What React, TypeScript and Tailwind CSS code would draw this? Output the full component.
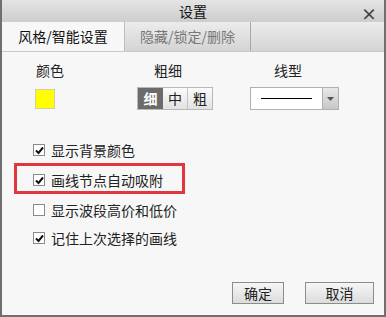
import React from 'react';

const font = { fontFamily: '"Noto Sans CJK SC", "Liberation Sans", sans-serif' };

function Check({ checked, label }: { checked: boolean; label: string }) {
    return (
        <div className="flex items-center h-[20px]">
            <span className="w-[12px] h-[12px] border border-[#8a8a8a] bg-white flex items-center justify-center">
                {checked && (
                    <svg width="9" height="9" viewBox="0 0 9 9">
                        <path d="M1 4.5 L3.5 7 L8 1.5" stroke="#111" strokeWidth="2" fill="none" />
                    </svg>
                )}
            </span>
            <span className="ml-[6px] text-[14px] text-[#222]">{label}</span>
        </div>
    );
}

export default function App() {
    return (
        <div
            style={font}
            className="w-[386px] h-[317px] bg-[#f7f7f7] border-x-2 border-b-2 border-[#6f6f6f] flex flex-col text-[#222]"
        >
            <div className="relative h-[22px] bg-gradient-to-b from-[#e4e4e4] to-[#cdcdcd] flex items-center justify-center text-[14px] text-[#111]">
                设置
                <span className="absolute right-[7px] top-[1px] text-[16px] font-bold text-[#444]">×</span>
            </div>
            <div className="h-[30px] flex bg-gradient-to-b from-[#ececec] to-[#d4d4d4] border-b border-[#c8c8c8]">
                <div className="w-[123px] bg-[#f7f7f7] flex items-center justify-center text-[14px] text-[#111] border-r border-[#bdbdbd]">
                    风格/智能设置
                </div>
                <div className="w-[126px] flex items-center justify-center text-[14px] text-[#777] border-r border-[#a8a8a8]">
                    隐藏/锁定/删除
                </div>
            </div>
            <div className="flex pt-[8px]">
                <div className="w-[135px] pl-[33px] flex flex-col">
                    <span className="text-[14px] h-[20px] leading-[20px] pl-[1px]">颜色</span>
                    <span className="mt-[9px] w-[20px] h-[20px] bg-[#ffff00] border border-[#d0d0a0]" />
                </div>
                <div className="w-[113px] flex flex-col">
                    <span className="text-[14px] h-[20px] leading-[20px] pl-[17px]">粗细</span>
                    <div className="mt-[7px] flex h-[23px] border border-[#b8b8b8] w-[76px] text-[14px]">
                        <span className="w-[25px] bg-[#6b6b6b] text-white font-bold flex items-center justify-center">细</span>
                        <span className="w-[25px] bg-gradient-to-b from-[#fbfbfb] to-[#e2e2e2] border-r border-[#c4c4c4] flex items-center justify-center">中</span>
                        <span className="w-[24px] bg-gradient-to-b from-[#fbfbfb] to-[#e2e2e2] flex items-center justify-center">粗</span>
                    </div>
                </div>
                <div className="flex flex-col">
                    <span className="text-[14px] h-[20px] leading-[20px] pl-[24px]">线型</span>
                    <div className="mt-[7px] flex h-[23px] w-[89px] border border-[#b0b0b0] bg-white">
                        <div className="flex-1 flex items-center justify-center">
                            <span className="w-[51px] h-[1px] bg-black" />
                        </div>
                        <div className="w-[16px] bg-gradient-to-b from-[#e8e8e8] to-[#c8c8c8] border-l border-[#b0b0b0] flex items-center justify-center">
                            <svg width="7" height="4" viewBox="0 0 7 4">
                                <path d="M0 0 L7 0 L3.5 4 Z" fill="#555" />
                            </svg>
                        </div>
                    </div>
                </div>
            </div>
            <div className="flex flex-col pl-[31px] mt-[30px]">
                <Check checked label="显示背景颜色" />
                <div className="-ml-[19px] mt-[3px] w-[171px] h-[31px] border-[3px] border-[#e0363c] pl-[16px] pt-[3px] flex items-center">
                    <Check checked label="画线节点自动吸附" />
                </div>
                <div className="mt-[6px]">
                    <Check checked={false} label="显示波段高价和低价" />
                </div>
                <div className="mt-[8px]">
                    <Check checked label="记住上次选择的画线" />
                </div>
            </div>
            <div className="mt-auto mb-[11px] flex justify-end gap-[21px] pr-[10px]">
                <button className="w-[52px] h-[22px] border border-[#8c8c8c] bg-gradient-to-b from-[#f6f6f6] to-[#dcdcdc] text-[14px] leading-[20px]">
                    确定
                </button>
                <button className="w-[69px] h-[22px] border border-[#8c8c8c] bg-gradient-to-b from-[#f6f6f6] to-[#dcdcdc] text-[14px] leading-[20px]">
                    取消
                </button>
            </div>
        </div>
    );
}
